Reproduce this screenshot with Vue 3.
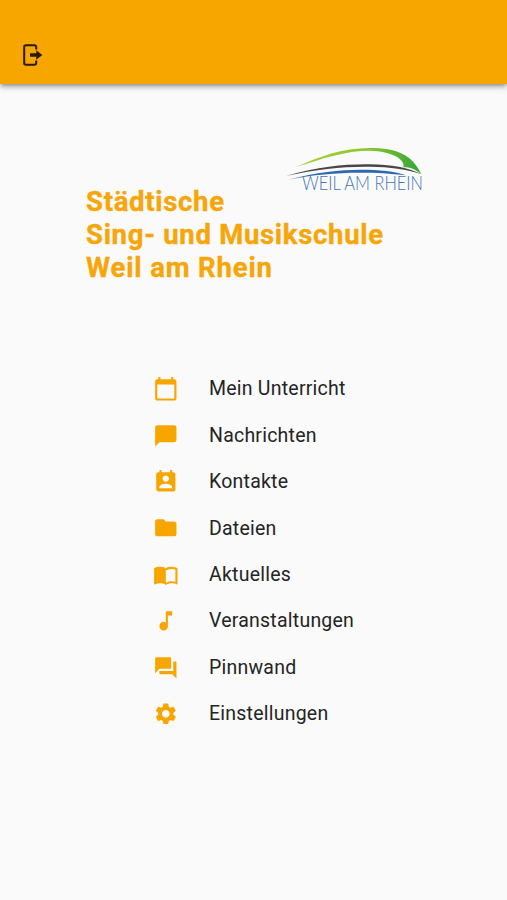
<script setup>
import { ref } from 'vue'

const titulo = ref([
  { texto: 'Städtische', classe: 'linha-um' },
  { texto: 'Sing- und Musikschule', classe: 'linha-dois' },
  { texto: 'Weil am Rhein', classe: 'linha-tres' },
])

const menu = ref([
  { nome: 'Mein Unterricht', icone: 'M20 3h-1V1h-2v2H7V1H5v2H4c-1.1 0-2 .9-2 2v16c0 1.1.9 2 2 2h16c1.1 0 2-.9 2-2V5c0-1.1-.9-2-2-2zm0 18H4V8h16v13z' },
  { nome: 'Nachrichten', icone: 'M20 2H4c-1.1 0-1.99.9-1.99 2L2 22l4-4h14c1.1 0 2-.9 2-2V4c0-1.1-.9-2-2-2z' },
  { nome: 'Kontakte', icone: 'M19 3h-1V1h-2v2H8V1H6v2H5c-1.11 0-2 .9-2 2v14c0 1.1.89 2 2 2h14c1.1 0 2-.9 2-2V5c0-1.1-.9-2-2-2zm-7 3c1.66 0 3 1.34 3 3s-1.34 3-3 3-3-1.34-3-3 1.34-3 3-3zm6 12H6v-1c0-2 4-3.1 6-3.1s6 1.1 6 3.1v1z' },
  { nome: 'Dateien', icone: 'M10 4H4c-1.1 0-1.99.9-1.99 2L2 18c0 1.1.9 2 2 2h16c1.1 0 2-.9 2-2V8c0-1.1-.9-2-2-2h-8l-2-2z' },
  { nome: 'Aktuelles', icone: 'M21 5c-1.11-.35-2.33-.5-3.5-.5-1.95 0-4.05.4-5.5 1.5-1.45-1.1-3.55-1.5-5.5-1.5S2.45 4.9 1 6v14.65c0 .25.25.5.5.5.1 0 .15-.05.25-.05C3.1 20.45 5.05 20 6.5 20c1.95 0 4.05.4 5.5 1.5 1.35-.85 3.8-1.5 5.5-1.5 1.65 0 3.35.3 4.75 1.05.1.05.15.05.25.05.25 0 .5-.25.5-.5V6c-.6-.45-1.25-.75-2-1zm0 13.5c-1.1-.35-2.3-.5-3.5-.5-1.7 0-4.15.65-5.5 1.5V8c1.35-.85 3.8-1.5 5.5-1.5 1.2 0 2.4.15 3.5.5v11.5z' },
  { nome: 'Veranstaltungen', icone: 'M12 3v10.55c-.59-.34-1.27-.55-2-.55-2.21 0-4 1.79-4 4s1.79 4 4 4 4-1.79 4-4V7h4V3h-6z' },
  { nome: 'Pinnwand', icone: 'M21 6h-2v9H6v2c0 .55.45 1 1 1h11l4 4V7c0-.55-.45-1-1-1zm-4 6V3c0-.55-.45-1-1-1H3c-.55 0-1 .45-1 1v14l4-4h10c.55 0 1-.45 1-1z' },
  { nome: 'Einstellungen', icone: 'M19.14 12.94c.04-.3.06-.61.06-.94 0-.32-.02-.64-.07-.94l2.03-1.58c.18-.14.23-.41.12-.61l-1.92-3.32c-.12-.22-.37-.29-.59-.22l-2.39.96c-.5-.38-1.03-.7-1.62-.94l-.36-2.54c-.04-.24-.24-.41-.48-.41h-3.84c-.24 0-.43.17-.47.41l-.36 2.54c-.59.24-1.13.57-1.62.94l-2.39-.96c-.22-.08-.47 0-.59.22L2.74 8.87c-.12.21-.08.47.12.61l2.03 1.58c-.05.3-.09.63-.09.94s.02.64.07.94l-2.03 1.58c-.18.14-.23.41-.12.61l1.92 3.32c.12.22.37.29.59.22l2.39-.96c.5.38 1.03.7 1.62.94l.36 2.54c.05.24.24.41.48.41h3.84c.24 0 .44-.17.47-.41l.36-2.54c.59-.24 1.13-.56 1.62-.94l2.39.96c.22.08.47 0 .59-.22l1.92-3.32c.12-.22.07-.47-.12-.61l-2.01-1.58zM12 15.6c-1.98 0-3.6-1.62-3.6-3.6s1.62-3.6 3.6-3.6 3.6 1.62 3.6 3.6-1.62 3.6-3.6 3.6z' },
])
</script>

<template>
  <div class="pagina">
    <header class="barra">
      <button class="sair" aria-label="Abmelden">
        <svg width="20" height="22" viewBox="0 0 20 22">
          <path d="M13.200 5.500V3a1.800 1.800 0 0 0-1.800-1.800H3A1.800 1.800 0 0 0 1.200 3v16A1.800 1.800 0 0 0 3 20.800h8.400a1.800 1.800 0 0 0 1.800-1.800v-2.500" fill="none" stroke="#2b1a04" stroke-width="2" />
          <path d="M7 9.200h6.200V6.300L19.300 11l-6.100 4.700v-2.900H7z" fill="#2b1a04" />
        </svg>
      </button>
    </header>

    <main>
      <section class="marca">
        <svg class="logo" width="170" height="70" viewBox="0 0 510 210">
          <defs>
            <linearGradient id="verde" x1="0" x2="1">
              <stop offset="0" stop-color="#a9cf38" />
              <stop offset=".55" stop-color="#8cc832" />
              <stop offset="1" stop-color="#34a535" />
            </linearGradient>
          </defs>
          <path d="M78 96C150 64 215 40 300 39C378 39 427 58 454 118C436 102 420 97 400 97C408 74 365 48 300 47C225 47 160 70 78 96Z" fill="url(#verde)" />
          <path d="M48 123C150 94 225 87 300 88C360 89 420 98 454 118C410 102 360 96 300 95C215 94 145 102 48 123Z" fill="#4a4647" />
          <path d="M55 134C140 112 210 104 270 104C330 104 375 109 408 121C360 115 320 113 270 113C195 113 130 119 55 134Z" fill="#2d69b3" />
          <text x="96" y="165" textLength="363" lengthAdjust="spacingAndGlyphs">WEIL AM RHEIN</text>
        </svg>
        <h1 class="titulo">
          <span v-for="linha in titulo" :key="linha.texto" :class="linha.classe">{{ linha.texto }}</span>
        </h1>
      </section>

      <nav class="menu">
        <a v-for="item in menu" :key="item.nome" class="item">
          <svg class="icone" viewBox="0 0 24 24"><path :d="item.icone" /></svg>
          <span>{{ item.nome }}</span>
        </a>
      </nav>
    </main>
  </div>
</template>

<style>
body {
  margin: 0;
  background-color: #fafafa;
}
</style>

<style scoped>
.pagina {
  min-height: 900px;
  background-color: #fafafa;
  font-family: Roboto, 'Liberation Sans', sans-serif;
}

.barra {
  box-sizing: border-box;
  height: 84px;
  padding: 44px 0 0 23px;
  background-color: #f7a600;
  box-shadow: 0 2px 4px -1px rgba(0, 0, 0, .3), 0 4px 5px rgba(0, 0, 0, .14), 0 1px 8px rgba(0, 0, 0, .12);
}

.sair {
  display: block;
  padding: 0;
  border: none;
  background: none;
}

.sair svg {
  display: block;
}

.marca {
  display: flex;
  flex-direction: column;
  padding: 51px 67px 0 86px;
}

.logo {
  align-self: flex-end;
  overflow: visible;
}

.logo text {
  font-family: Lato, sans-serif;
  font-size: 58px;
  font-weight: 300;
  fill: #4376b4;
}

.titulo {
  display: flex;
  flex-direction: column;
  align-items: flex-start;
  align-self: flex-start;
  margin: -20px 0 0;
  font-size: 27.5px;
  font-weight: 700;
  line-height: 33px;
  white-space: nowrap;
  color: #f7a60a;
  -webkit-text-stroke: .4px #f7a60a;
}

.linha-um {
  letter-spacing: .7px;
}

.linha-dois {
  letter-spacing: .7px;
}

.linha-tres {
  letter-spacing: .85px;
}

.menu {
  display: flex;
  flex-direction: column;
  padding: 81.800px 0 0 153px;
}

.item {
  display: flex;
  align-items: center;
  gap: 30.400px;
  height: 46.4px;
  font-size: 19.500px;
  letter-spacing: .23px;
  color: #242424;
}

.icone {
  width: 25.600px;
  height: 25.600px;
  fill: #f7a600;
}
</style>
